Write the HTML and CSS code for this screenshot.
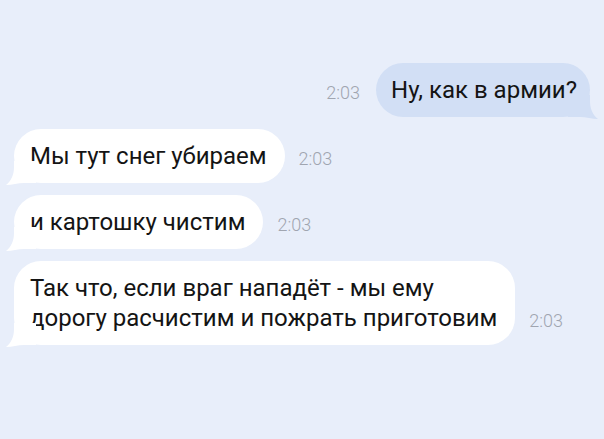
FILE: index.html
```html
<!DOCTYPE html>
<html lang="ru">
<head>
    <meta charset="UTF-8">
    <meta name="viewport" content="width=device-width, initial-scale=1.0">
    <title>Чат</title>
    <link rel="stylesheet" href="styles.css">
</head>
<body>
    <div class="chat">
        <div class="row out">
            <span class="time">2:03</span>
            <div class="bubble">
                Ну, как в армии?
                <svg class="tail" width="30" height="24" viewBox="0 0 30 24"><path d="M8 0 H30 V22 H18 C12 22 6 24 0 24 C5 20 8 14 8 6 Z"/></svg>
            </div>
        </div>

        <div class="row in">
            <div class="bubble">
                Мы тут снег убираем
                <svg class="tail" width="30" height="24" viewBox="0 0 30 24"><path d="M8 0 H30 V22 H18 C12 22 6 24 0 24 C5 20 8 14 8 6 Z"/></svg>
            </div>
            <span class="time">2:03</span>
        </div>

        <div class="row in">
            <div class="bubble">
                и картошку чистим
                <svg class="tail" width="30" height="24" viewBox="0 0 30 24"><path d="M8 0 H30 V22 H18 C12 22 6 24 0 24 C5 20 8 14 8 6 Z"/></svg>
            </div>
            <span class="time">2:03</span>
        </div>

        <div class="row in">
            <div class="bubble">
                Так что, если враг нападёт - мы ему<br>
                дорогу расчистим и пожрать приготовим
                <svg class="tail" width="30" height="24" viewBox="0 0 30 24"><path d="M8 0 H30 V22 H18 C12 22 6 24 0 24 C5 20 8 14 8 6 Z"/></svg>
            </div>
            <span class="time">2:03</span>
        </div>
    </div>
</body>
</html>
```

FILE: styles.css
```css
body {
    margin: 0;
    height: 100vh;
    background-color: #e8eefa;
    font-family: Roboto, "Noto Sans", sans-serif;
}
.chat {
    display: flex;
    flex-direction: column;
    gap: 12px;
    padding: 63px 14px 0 14px;
}
.row {
    display: flex;
    align-items: flex-end;
    gap: 14px;
}
.out {
    justify-content: flex-end;
    gap: 16px;
}
.bubble {
    position: relative;
    padding: 12px 18px 12px 16px;
    border-radius: 27px;
    font-size: 24px;
    line-height: 30px;
    color: #141414;
    background-color: #ffffff;
}
.out .bubble {
    padding: 12px 13px 12px 15px;
    background-color: #d2dff5;
}
.tail {
    position: absolute;
    left: -8px;
    bottom: -2px;
    fill: #ffffff;
}
.out .tail {
    left: auto;
    right: -8px;
    transform: scaleX(-1);
    fill: #d2dff5;
}
.time {
    margin-bottom: 15px;
    font-size: 18px;
    font-weight: 300;
    line-height: 18px;
    color: #a0a5b0;
}
```
